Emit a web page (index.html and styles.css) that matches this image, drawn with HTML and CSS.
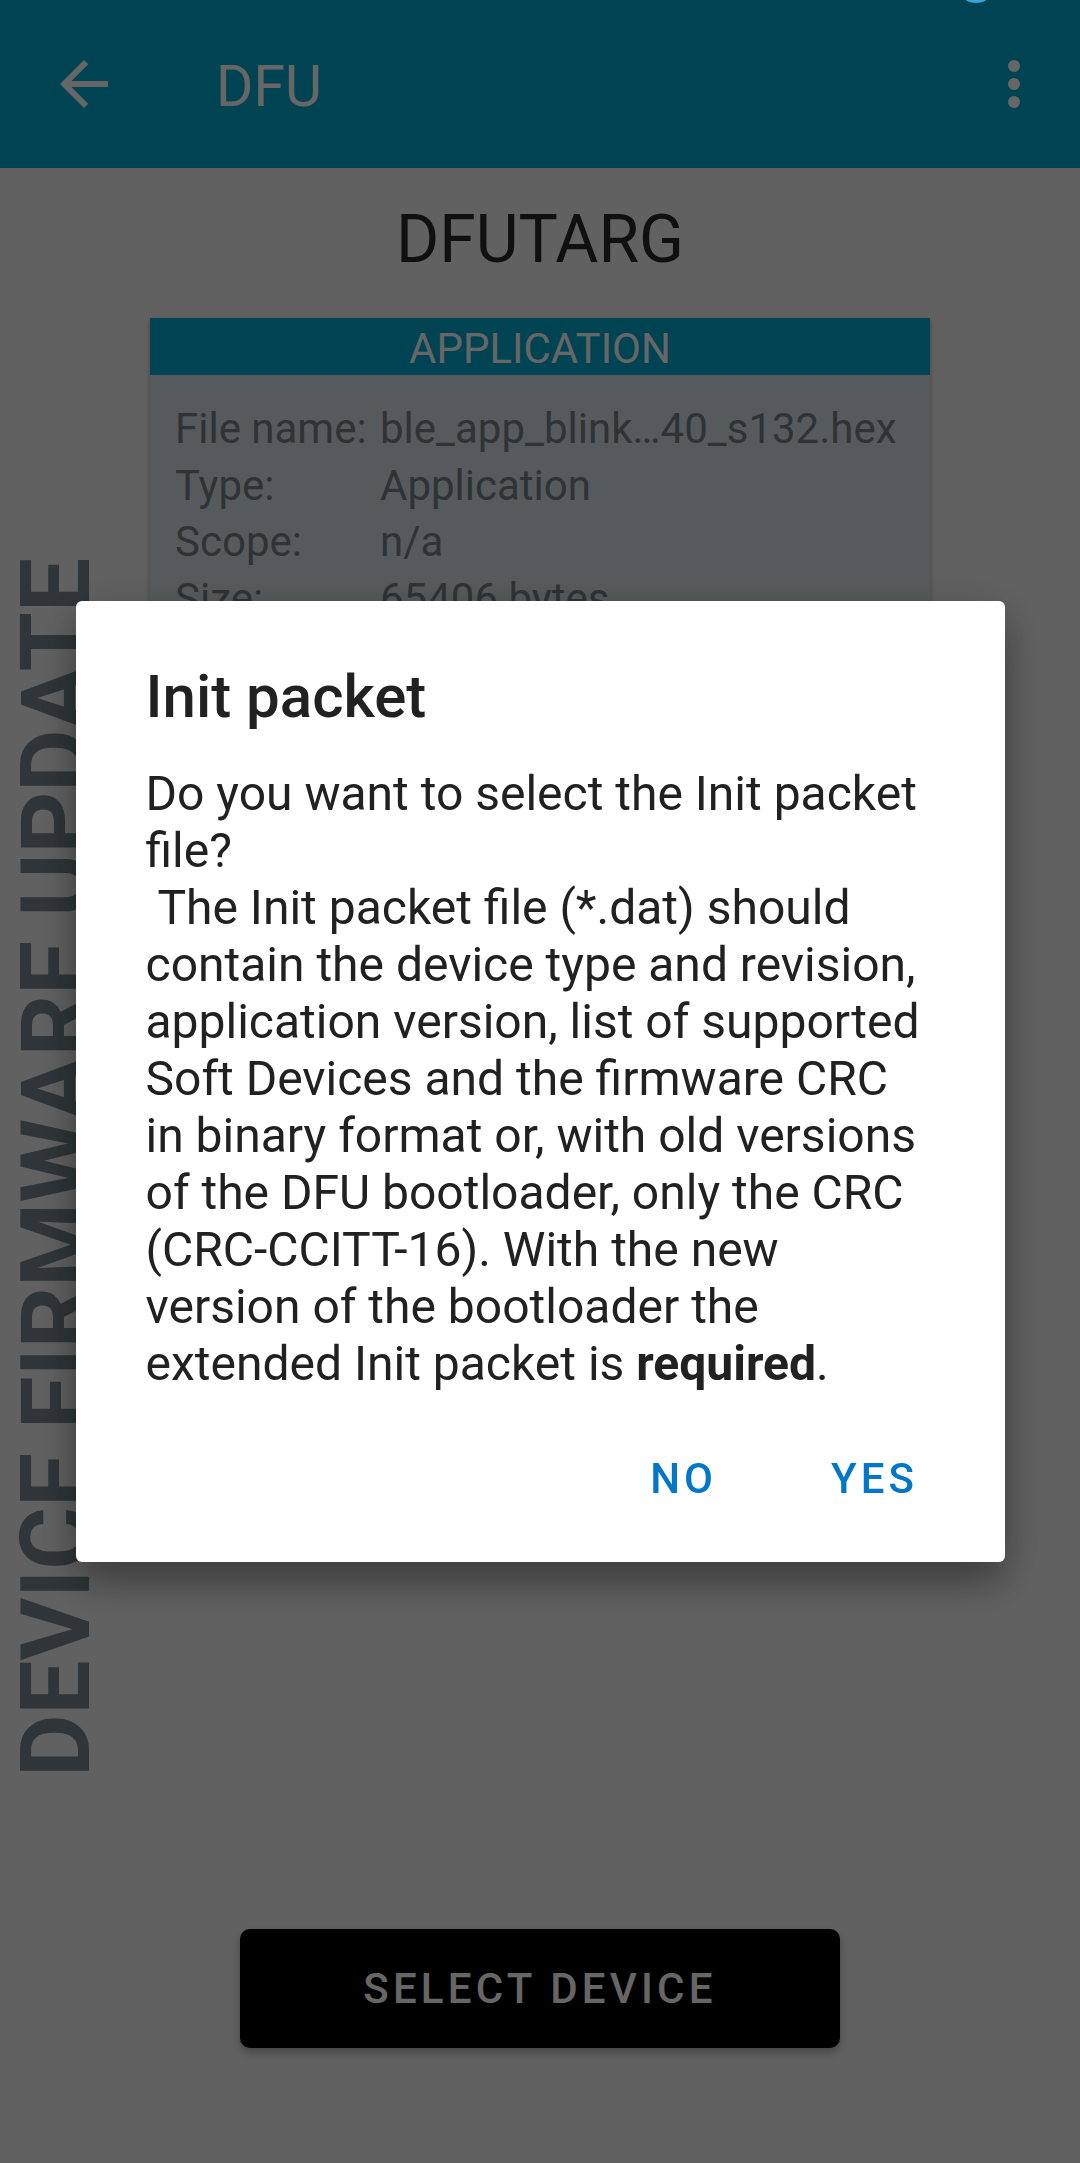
FILE: index.html
```html
<!DOCTYPE html>
<html>
<head>
    <meta charset="UTF-8">
    <meta name="viewport" content="width=device-width, initial-scale=1.0">
    <title>DFU</title>
    <link rel="stylesheet" href="styles.css">
</head>

<body>
    <div class="screen">
        <header class="toolbar">
            <button class="icon-btn" aria-label="Back">
                <svg viewBox="0 0 24 24" width="72" height="72">
                    <path d="M20 11H7.83l5.59-5.59L12 4l-8 8 8 8 1.41-1.41L7.83 13H20v-2z" fill="#fff"/>
                </svg>
            </button>
            <h1 class="toolbar-title">DFU</h1>
            <button class="icon-btn menu-btn" aria-label="More options">
                <svg viewBox="0 0 24 24" width="72" height="72">
                    <circle cx="12" cy="6" r="2" fill="#fff"/>
                    <circle cx="12" cy="12" r="2" fill="#fff"/>
                    <circle cx="12" cy="18" r="2" fill="#fff"/>
                </svg>
            </button>
        </header>

        <main class="content">
            <div class="side-label">DEVICE FIRMWARE UPDATE</div>

            <h2 class="device-name">DFUTARG</h2>

            <section class="file-card">
                <div class="file-card-header">APPLICATION</div>
                <dl class="file-info">
                    <dt>File name:</dt>
                    <dd>ble_app_blink…40_s132.hex</dd>
                    <dt>Type:</dt>
                    <dd>Application</dd>
                    <dt>Scope:</dt>
                    <dd>n/a</dd>
                    <dt>Size:</dt>
                    <dd>65406 bytes</dd>
                </dl>
            </section>

            <button class="select-btn">SELECT DEVICE</button>
        </main>
    </div>

    <span class="status-dot"></span>

    <!-- Init packet dialog -->
    <div class="backdrop">
        <div class="dialog">
            <h3 class="dialog-title">Init packet</h3>
            <p class="dialog-text">Do you want to select the Init packet<br>file?<br>&nbsp;The Init packet file (*.dat) should<br>contain the device type and revision,<br>application version, list of supported<br>Soft Devices and the firmware CRC<br>in binary format or, with old versions<br>of the DFU bootloader, only the CRC<br>(CRC-CCITT-16). With the new<br>version of the bootloader the<br>extended Init packet is <b>required</b>.</p>
            <div class="dialog-actions">
                <button class="dialog-btn">NO</button>
                <button class="dialog-btn">YES</button>
            </div>
        </div>
    </div>
</body>

</html>
```

FILE: styles.css
```css
body {
    margin: 0;
    padding: 0;
    font-family: Roboto, "Liberation Sans", sans-serif;
    background-color: #f2f2f2;
    color: #212121;
}

button {
    font-family: inherit;
    border: none;
    background: none;
    padding: 0;
    cursor: pointer;
}

.screen {
    height: 100vh;
    display: flex;
    flex-direction: column;
}

/* toolbar */
.toolbar {
    height: 168px;
    flex-shrink: 0;
    display: flex;
    align-items: center;
    padding: 0 30px 0 48px;
    background-color: #00a9ce;
}

.icon-btn {
    width: 72px;
    height: 72px;
    display: flex;
}

.toolbar-title {
    margin: 5px 0 0 96px;
    font-size: 57px;
    font-weight: 400;
    line-height: 62px;
    color: #fff;
}

.menu-btn {
    margin-left: auto;
}

/* main content */
.content {
    flex: 1;
    position: relative;
    display: flex;
    flex-direction: column;
    align-items: center;
    padding-top: 32px;
}

.side-label {
    position: absolute;
    left: 8px;
    top: 390px;
    writing-mode: vertical-rl;
    transform: rotate(180deg);
    font-size: 96px;
    font-weight: 700;
    line-height: 96px;
    color: #75848c;
    white-space: nowrap;
}

.device-name {
    margin: 0;
    font-size: 66px;
    font-weight: 400;
    line-height: 80px;
    color: #2a2a2a;
}

.file-card {
    width: 780px;
    margin-top: 38px;
    background-color: #dae2e5;
    box-shadow: 0 2px 6px rgba(0, 0, 0, 0.25);
}

.file-card-header {
    height: 53px;
    padding-top: 4px;
    line-height: 53px;
    text-align: center;
    font-size: 42px;
    color: #fff;
    background-color: #00a9ce;
}

.file-info {
    display: grid;
    grid-template-columns: 205px 1fr;
    margin: 0;
    padding: 26px 25px 30px;
    font-size: 42px;
    line-height: 56.5px;
    color: #738085;
}

.file-info dt,
.file-info dd {
    margin: 0;
    white-space: nowrap;
}

.select-btn {
    margin-top: auto;
    margin-bottom: 115px;
    width: 600px;
    height: 119px;
    border-radius: 10px;
    background-color: #000;
    color: #fff;
    font-size: 42px;
    font-weight: 500;
    letter-spacing: 4.2px;
    box-shadow: 0 4px 8px rgba(0, 0, 0, 0.3);
}

.status-dot {
    position: fixed;
    top: -7px;
    left: 965px;
    width: 22px;
    height: 10px;
    border-radius: 50%;
    background-color: #35a7dc;
    z-index: 20;
}

/* dialog */
.backdrop {
    position: fixed;
    inset: 0;
    display: flex;
    align-items: center;
    justify-content: center;
    background-color: rgba(0, 0, 0, 0.6);
    z-index: 10;
}

.dialog {
    width: 929px;
    padding: 62px 0 34px;
    background-color: #fff;
    border-radius: 6px;
    box-shadow: 0 24px 38px rgba(0, 0, 0, 0.25), 0 9px 46px rgba(0, 0, 0, 0.2);
}

.dialog-title {
    margin: 0 70px;
    font-size: 60px;
    font-weight: 500;
    line-height: 68px;
    color: #212121;
}

.dialog-text {
    margin: 34px 70px 37px;
    font-size: 48px;
    line-height: 57px;
    color: #212121;
    white-space: nowrap;
}

.dialog-actions {
    display: flex;
    justify-content: flex-end;
    gap: 15px;
    padding-right: 42px;
}

.dialog-btn {
    min-width: 176px;
    height: 99px;
    font-size: 42px;
    font-weight: 500;
    letter-spacing: 4px;
    color: #0077c8;
}
```
